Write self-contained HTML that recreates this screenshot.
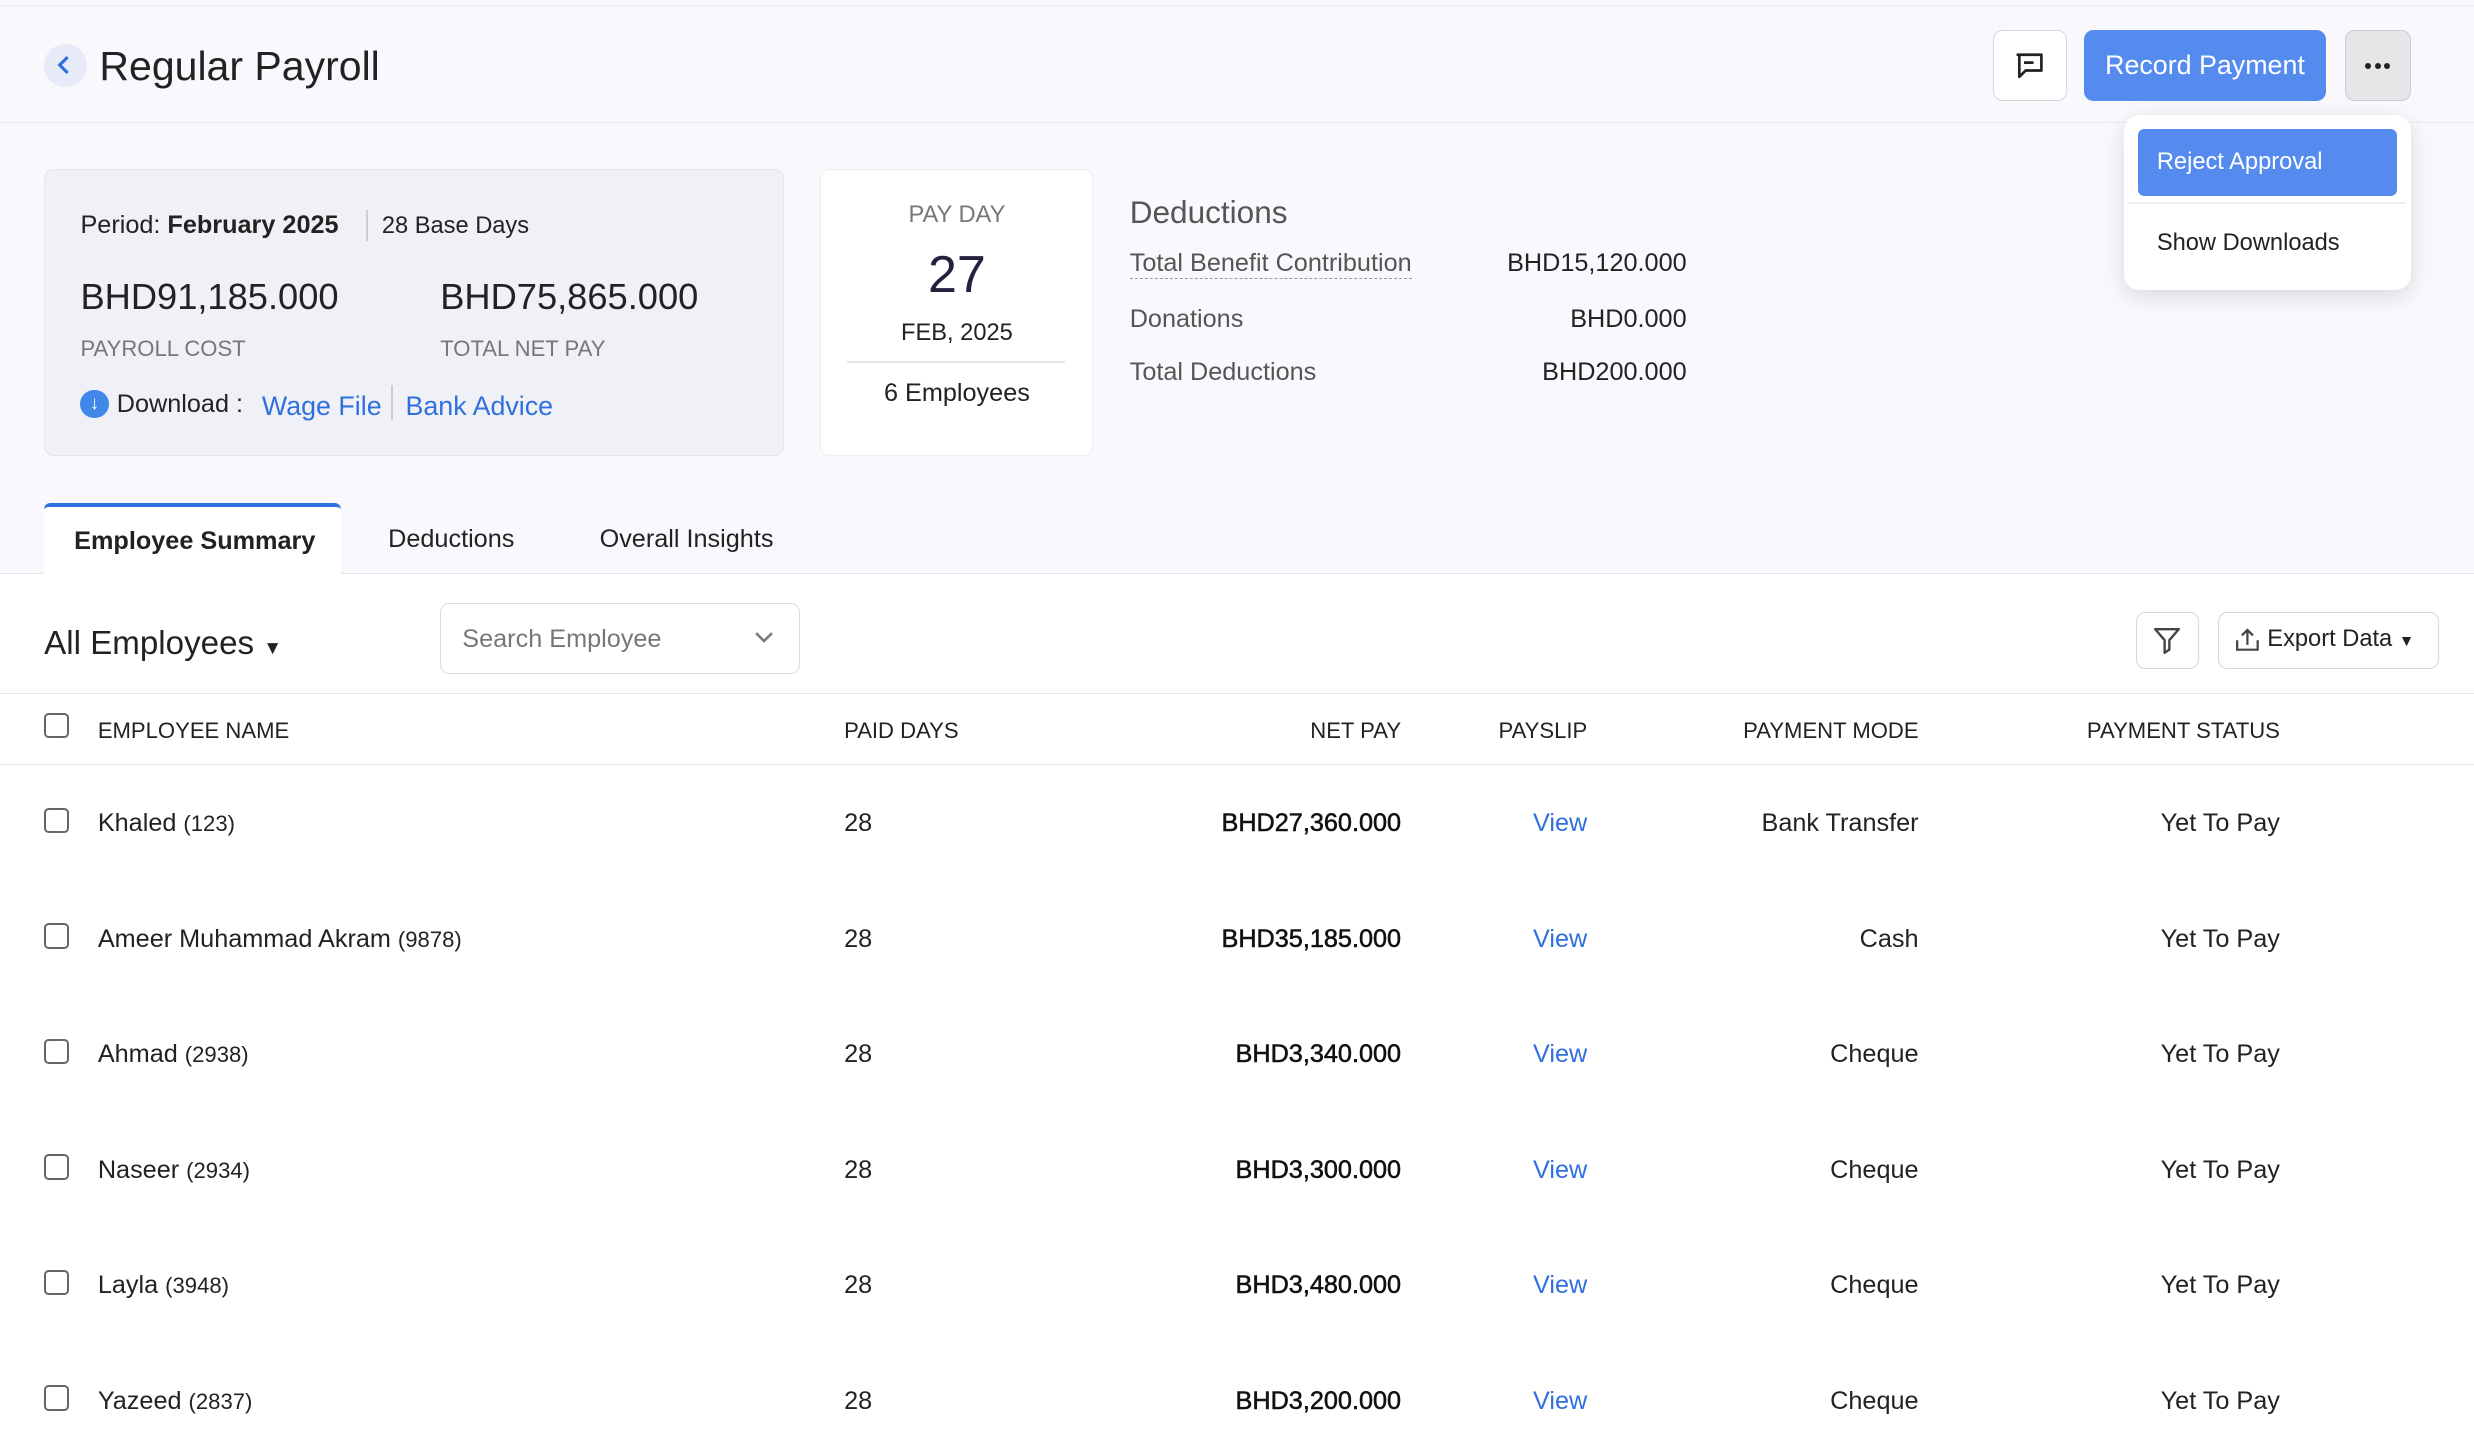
<!DOCTYPE html>
<html><head><meta charset="utf-8"><style>
*{box-sizing:border-box;margin:0;padding:0}
html,body{width:2474px;height:1456px;overflow:hidden;background:#fff}
#w{zoom:1.5778;width:1568px;height:923px;position:relative;font-family:"Liberation Sans",sans-serif;color:#222;background:#fff}
.a{position:absolute;white-space:nowrap}
.top{position:absolute;left:0;top:0;width:1568px;height:364px;background:#f9f9fd;border-bottom:1px solid #e4e6ec}
.hdr{position:absolute;left:0;top:3px;width:1568px;height:75px;border-top:1px solid #eceef3;border-bottom:1px solid #e8eaef}
.btn{position:absolute;border-radius:6px}
.card{position:absolute;border:1px solid #e3e5ec;border-radius:6px}
.lbl{color:#777;font-size:14px}
.blue{color:#2f6fde}
.th{font-size:14px;color:#222;top:455px}
.cb{position:absolute;left:28px;width:16px;height:16px;border:1.5px solid #666;border-radius:3px;background:#fff}
.row{font-size:16px}
</style></head><body><div id="w">
<div class="top"></div>
<div class="hdr"></div>
<div class="a" style="left:28px;top:28px;width:27px;height:27px;border-radius:50%;background:#e6ebf7"></div>
<svg class="a" style="left:35px;top:34px" width="12" height="14"><path d="M8 2 L3 7 L8 12" stroke="#2f6fde" stroke-width="2" fill="none"/></svg>
<div class="a" style="left:63px;top:27px;font-size:26px;color:#222">Regular Payroll</div>
<div class="btn" style="left:1263px;top:19px;width:47px;height:45px;background:#fff;border:1px solid #d4d6dc"></div>
<svg class="a" style="left:1276px;top:32px" width="22" height="20"><path d="M3 3 H18 V13 H8 L4 17 V3 Z M7 8 H13" stroke="#222" stroke-width="1.7" fill="none" stroke-linejoin="round"/></svg>
<div class="btn" style="left:1321px;top:19px;width:153px;height:45px;background:#558bef;color:#fff;font-size:17px;text-align:center;line-height:45px">Record Payment</div>
<div class="btn" style="left:1486px;top:19px;width:42px;height:45px;background:#e6e6e8;border:1px solid #ccc"></div>
<div class="a" style="left:1499px;top:40px;width:4px;height:4px;border-radius:50%;background:#222"></div>
<div class="a" style="left:1505px;top:40px;width:4px;height:4px;border-radius:50%;background:#222"></div>
<div class="a" style="left:1511px;top:40px;width:4px;height:4px;border-radius:50%;background:#222"></div>
<div class="a" style="left:1346px;top:73px;width:182px;height:111px;background:#fff;border-radius:10px;box-shadow:0 4px 14px rgba(0,0,0,.13)"></div>
<div class="btn" style="left:1355px;top:82px;width:164px;height:42px;background:#558bef;color:#fff;font-size:15px;line-height:42px;padding-left:12px;border-radius:4px">Reject Approval</div>
<div class="a" style="left:1349px;top:128px;width:176px;height:1px;background:#eee"></div>
<div class="a" style="left:1367px;top:146px;font-size:15px">Show Downloads</div>

<div class="card" style="left:28px;top:107px;width:469px;height:182px;background:#f0f1f6"></div>
<div class="a" style="left:51px;top:134px;font-size:16px">Period: <b style="font-weight:600">February 2025</b></div>
<div class="a" style="left:232px;top:133px;width:1px;height:20px;background:#ccc"></div>
<div class="a" style="left:242px;top:135px;font-size:15px">28 Base Days</div>
<div class="a" style="left:51px;top:175px;font-size:23px">BHD91,185.000</div>
<div class="a" style="left:279px;top:175px;font-size:23px">BHD75,865.000</div>
<div class="a lbl" style="left:51px;top:213px">PAYROLL COST</div>
<div class="a lbl" style="left:279px;top:213px">TOTAL NET PAY</div>
<div class="a" style="left:51px;top:247px;width:18px;height:18px;border-radius:50%;background:#3f88e8;color:#fff;font-size:12px;text-align:center;line-height:18px">↓</div>
<div class="a" style="left:74px;top:247px;font-size:16px">Download :</div>
<div class="a blue" style="left:166px;top:248px;font-size:17px">Wage File</div>
<div class="a" style="left:248px;top:244px;width:1px;height:22px;background:#ccc"></div>
<div class="a blue" style="left:257px;top:248px;font-size:17px">Bank Advice</div>

<div class="card" style="left:520px;top:107px;width:173px;height:182px;background:#fff;border-color:#eceef2"></div>
<div class="a lbl" style="left:520px;width:173px;text-align:center;top:128px;font-size:15px">PAY DAY</div>
<div class="a" style="left:520px;width:173px;text-align:center;top:155px;font-size:33px;color:#222240">27</div>
<div class="a" style="left:520px;width:173px;text-align:center;top:203px;font-size:15px">FEB, 2025</div>
<div class="a" style="left:537px;top:229px;width:138px;height:1px;background:#e6e6e6"></div>
<div class="a" style="left:520px;width:173px;text-align:center;top:240px;font-size:16px">6 Employees</div>

<div class="a" style="left:716px;top:123px;font-size:20px;color:#555">Deductions</div>
<div class="a" style="left:716px;top:158px;font-size:16px;color:#555;border-bottom:1px dashed #999">Total Benefit Contribution</div>
<div class="a" style="left:716px;top:193px;font-size:16px;color:#555">Donations</div>
<div class="a" style="left:716px;top:227px;font-size:16px;color:#555">Total Deductions</div>
<div class="a" style="left:869px;width:200px;text-align:right;top:158px;font-size:16px">BHD15,120.000</div>
<div class="a" style="left:869px;width:200px;text-align:right;top:193px;font-size:16px">BHD0.000</div>
<div class="a" style="left:869px;width:200px;text-align:right;top:227px;font-size:16px">BHD200.000</div>

<div class="a" style="left:28px;top:319px;width:188px;height:47px;background:#fff;border-top:3px solid #2f6fde;border-radius:4px 4px 0 0"></div>
<div class="a" style="left:47px;top:334px;font-size:16px;font-weight:600">Employee Summary</div>
<div class="a" style="left:246px;top:333px;font-size:16px">Deductions</div>
<div class="a" style="left:380px;top:333px;font-size:16px">Overall Insights</div>

<div class="a" style="left:28px;top:396px;font-size:21px">All Employees <span style="font-size:12px">▼</span></div>
<div class="btn" style="left:279px;top:382px;width:228px;height:45px;border:1px solid #dcdde2;background:#fff"></div>
<div class="a" style="left:293px;top:396px;font-size:16px;color:#777">Search Employee</div>
<svg class="a" style="left:477px;top:399px" width="14" height="10"><path d="M2 2 L7 7 L12 2" stroke="#777" stroke-width="1.6" fill="none"/></svg>
<div class="btn" style="left:1354px;top:388px;width:40px;height:36px;border:1px solid #d4d6dc"></div>
<svg class="a" style="left:1364px;top:397px" width="20" height="18"><path d="M2 2 H17 L11 9 V15 L8 17 V9 Z" stroke="#444" stroke-width="1.5" fill="none" stroke-linejoin="round"/></svg>
<div class="btn" style="left:1406px;top:388px;width:140px;height:36px;border:1px solid #d4d6dc"></div>
<svg class="a" style="left:1416px;top:397px" width="18" height="18"><path d="M2 9 V15 H15 V9 M8.5 12 V3 M5 6 L8.5 2.5 L12 6" stroke="#444" stroke-width="1.4" fill="none"/></svg>
<div class="a" style="left:1437px;top:397px;font-size:15px">Export Data <span style="font-size:10px">▼</span></div>

<div class="a" style="left:0;top:439px;width:1568px;height:1px;background:#e4e6ec"></div>
<div class="a" style="left:0;top:484px;width:1568px;height:1px;background:#e4e6ec"></div>
<div class="cb" style="top:452px"></div>
<div class="a th" style="left:62px">EMPLOYEE NAME</div>
<div class="a th" style="left:535px">PAID DAYS</div>
<div class="a th" style="left:688px;width:200px;text-align:right">NET PAY</div>
<div class="a th" style="left:906px;width:100px;text-align:right">PAYSLIP</div>
<div class="a th" style="left:1016px;width:200px;text-align:right">PAYMENT MODE</div>
<div class="a th" style="left:1245px;width:200px;text-align:right">PAYMENT STATUS</div>

<div id="rows"></div>
<script>
var d=[["Khaled","123","BHD27,360.000","Bank Transfer"],["Ameer Muhammad Akram","9878","BHD35,185.000","Cash"],["Ahmad","2938","BHD3,340.000","Cheque"],["Naseer","2934","BHD3,300.000","Cheque"],["Layla","3948","BHD3,480.000","Cheque"],["Yazeed","2837","BHD3,200.000","Cheque"]];
var h="";d.forEach(function(r,i){var y=513+i*73.2;
h+='<div class="cb" style="top:'+(y-1)+'px"></div>';
h+='<div class="a row" style="left:62px;top:'+y+'px">'+r[0]+' <span style="font-size:14px">('+r[1]+')</span></div>';
h+='<div class="a row" style="left:535px;top:'+y+'px">28</div>';
h+='<div class="a row" style="left:688px;width:200px;text-align:right;top:'+y+'px;color:#111;-webkit-text-stroke:0.35px #111">'+r[2]+'</div>';
h+='<div class="a row blue" style="left:906px;width:100px;text-align:right;top:'+y+'px">View</div>';
h+='<div class="a row" style="left:1016px;width:200px;text-align:right;top:'+y+'px">'+r[3]+'</div>';
h+='<div class="a row" style="left:1245px;width:200px;text-align:right;top:'+y+'px">Yet To Pay</div>';});
document.getElementById("rows").innerHTML=h;
</script>
</div></body></html>
